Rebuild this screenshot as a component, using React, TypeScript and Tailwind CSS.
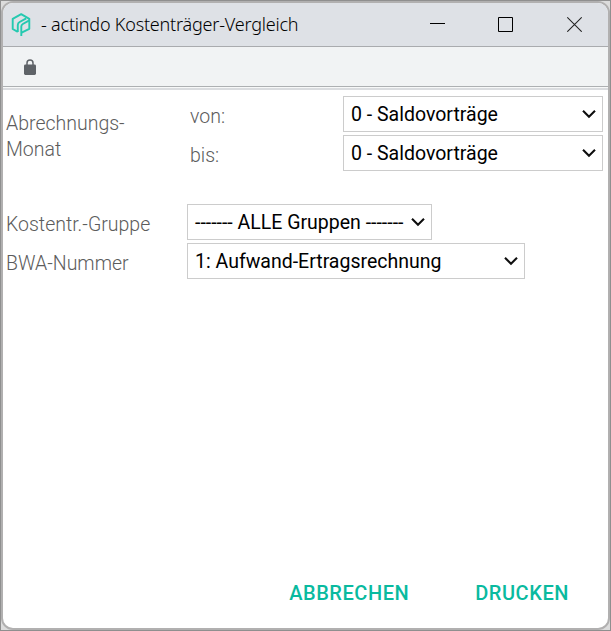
import React from "react";

function Select({ text, className }: { text: string; className: string }) {
  return (
    <button
      type="button"
      className={`flex h-9 items-center justify-between border border-[#cccccc] bg-white pr-1.5 pl-[7px] text-left text-[19.5px] leading-[32px] font-normal text-black ${className}`}
    >
      <span className="pt-0.5 whitespace-pre">{text}</span>
      <svg width="14" height="10" viewBox="0 0 14 10" fill="none" className="shrink-0">
        <path d="M1 1.8 L7 7.8 L13 1.8" stroke="#101010" strokeWidth="2.1" />
      </svg>
    </button>
  );
}

function Logo() {
  return (
    <svg width="20" height="24" viewBox="0 0 20 24" fill="none" stroke="#25c9b0" strokeWidth="1.9" strokeLinejoin="round">
      <path d="M6.8 18.9 L1.7 16 V5.9 L10.2 1.2 L18.3 5.8 V15.8 L10.6 19.6" />
      <path d="M6.8 18.9 V12 Q6.8 10 8.6 9 L15.2 5.4" />
      <path d="M10.3 23 V13.6 Q10.3 11.9 11.8 11 L18.3 7.4" />
    </svg>
  );
}

export default function App() {
  return (
    <div className="h-[631px] w-[611px] border border-[#8f8f8f] bg-[#dcdcdc] font-['Roboto',sans-serif]">
      <div className="flex h-[629px] flex-col overflow-hidden rounded-[12px] border-2 border-[#b1b0b0] bg-white">
        <header className="flex h-11 shrink-0 items-center border-b border-[#a9abae] bg-[#dee1e6]">
          <div className="ml-2 flex">
            <Logo />
          </div>
          <h1 className="ml-[10px] pb-0.5 font-['Noto_Sans',sans-serif] text-[18px] leading-6 font-light tracking-[-0.2px] whitespace-nowrap text-black">
            - actindo Kostenträger-Vergleich
          </h1>
          <div className="mr-[26px] ml-auto flex items-center gap-[53px] pb-0.5">
            <svg width="15" height="16" viewBox="0 0 15 16">
              <path d="M0 7.5 H15" stroke="#000" />
            </svg>
            <svg width="15" height="16" viewBox="0 0 15 16" fill="none">
              <path d="M.5 1.5 H14.5 V15.5 H.5 Z" stroke="#000" />
            </svg>
            <svg width="15" height="16" viewBox="0 0 15 16" className="ml-px">
              <path d="M.3 1.3 L14.7 15.7 M14.7 1.3 L.3 15.7" stroke="#222" strokeWidth="1.1" />
            </svg>
          </div>
        </header>
        <div className="flex h-10 shrink-0 items-center border-b border-[#adb0b2] bg-[#f1f3f4] pt-0.5 pl-[21px]">
          <svg width="12" height="17" viewBox="0 0 12 17">
            <path d="M3 7 V4 a3 3 0 0 1 6 0 V7" fill="none" stroke="#5f6368" strokeWidth="1.5" />
            <rect y="5.5" width="12" height="10.5" rx="1.4" fill="#5f6368" />
          </svg>
        </div>
        <div className="h-[3px] shrink-0 border-b-2 border-[#dadcdf] bg-[#f7f8f8]" />

        <main className="flex flex-1 flex-col text-[19.5px] font-light text-[#5c5c5c]">
          <section className="mt-1.5 flex pl-[3px]">
            <div className="w-[184px] pt-[15px] leading-[26px]">
              Abrechnungs-
              <br />
              Monat
            </div>
            <div className="flex flex-col gap-[3px]">
              <div className="flex h-9 items-center">
                <span className="w-[153px] pt-1.5">von:</span>
                <Select text="0 - Saldovorträge" className="w-[260px]" />
              </div>
              <div className="flex h-9 items-center">
                <span className="w-[153px] pt-1.5">bis:</span>
                <Select text="0 - Saldovorträge" className="w-[260px]" />
              </div>
            </div>
          </section>
          <section className="mt-[33px] flex flex-col gap-[3px] pl-[3px]">
            <div className="flex h-9 items-center">
              <span className="w-[181px] pt-1.5">Kostentr.-Gruppe</span>
              <Select text="------- ALLE Gruppen -------" className="w-[245px]" />
            </div>
            <div className="flex h-9 items-center">
              <span className="w-[181px] pt-1.5">BWA-Nummer</span>
              <Select text="1: Aufwand-Ertragsrechnung" className="w-[338px]" />
            </div>
          </section>
          <footer className="mt-auto mr-[39px] mb-5 flex justify-end gap-[66px] text-[20px] leading-[30px] font-medium tracking-[0.55px] text-[#09ba9f]">
            <button type="button">ABBRECHEN</button>
            <button type="button">DRUCKEN</button>
          </footer>
        </main>
      </div>
    </div>
  );
}
